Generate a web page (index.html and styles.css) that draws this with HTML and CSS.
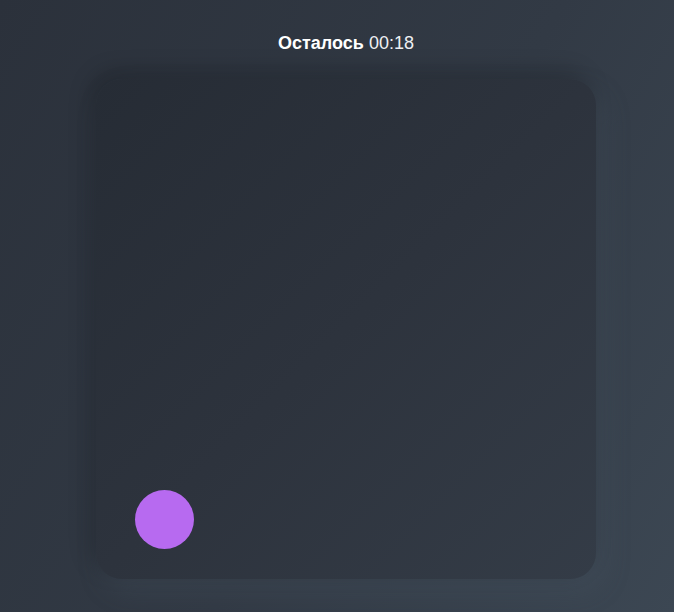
FILE: index.html
```html
<!DOCTYPE html>
<html lang="ru">
<head>
<meta charset="utf-8">
<title>Игра</title>
<link rel="stylesheet" href="styles.css">
</head>
<body>
<main class="page">
  <div class="timer"><strong class="timer-label">Осталось</strong> <span class="timer-value">00:18</span></div>
  <div class="field">
    <div class="ball"></div>
  </div>
</main>
</body>
</html>
```
FILE: styles.css
```css
html, body {
  margin: 0;
  padding: 0;
  height: 100%;
}
body {
  background: linear-gradient(120deg, #2b313b 0%, #323a45 55%, #3c4753 100%);
  font-family: "Liberation Sans", Arial, sans-serif;
  color: #ffffff;
  overflow: hidden;
}
.page {
  display: flex;
  flex-direction: column;
  align-items: center;
  padding-top: 33px;
  padding-left: 18px;
  gap: 25px;
}
.timer {
  font-size: 18px;
  line-height: 21px;
}
.timer-label {
  font-weight: 700;
}
.timer-value {
  font-weight: 400;
  color: #eef0f3;
}
.field {
  position: relative;
  width: 500px;
  height: 500px;
  border-radius: 26px;
  background: linear-gradient(135deg, #262c35 0%, #2d333d 50%, #343c47 100%);
  box-shadow: -6px -8px 22px rgba(0, 0, 0, 0.2), 8px 12px 26px rgba(72, 86, 100, 0.3);
}
.ball {
  position: absolute;
  left: 39px;
  top: 411px;
  width: 59px;
  height: 59px;
  border-radius: 50%;
  background: #b76af0;
}
```
